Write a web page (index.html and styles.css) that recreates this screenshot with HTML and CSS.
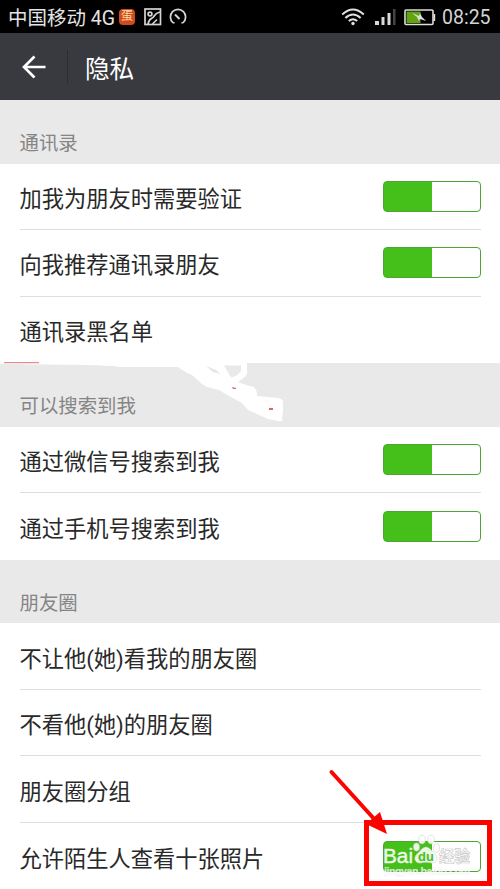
FILE: index.html
```
<!DOCTYPE html>
<html lang="zh-CN">
<head>
<meta charset="utf-8">
<title>隐私</title>
<link rel="stylesheet" href="styles.css">
</head>
<body>
<div class="screen">
  <div class="status">
    <span class="carrier">中国移动 4G</span>
    <span class="egg">蛋</span>
    <svg class="pic" width="18" height="18" viewBox="0 0 18 18" fill="none" stroke="#d4d4d4" stroke-width="1.7"><rect x="1" y="1" width="15.5" height="15.5"/><circle cx="6" cy="6" r="1.900"/><path d="M4 16C5 10 8 11 9.500 9S11 5 16 4M8.500 16l4.500-4.500"/></svg>
    <svg class="gauge" width="18" height="18" viewBox="0 0 18 18" fill="none" stroke="#d4d4d4" stroke-width="1.7"><path d="M5.500 14.800L3.800 14.500A7.600 7.600 0 1 1 14.200 14.500L12.500 14.800"/><path d="M6 6.500l4.500 4.500" stroke-width="2"/></svg>
    <span class="grow"></span>
    <svg class="wifi" width="24" height="18" viewBox="0 0 24 18" fill="none" stroke="#e0e0e0" stroke-width="2"><path d="M1.2 6.5Q12-3.5 22.8 6.5M4.4 9.9Q12 3 19.6 9.9M7.8 13.1Q12 9.3 16.2 13.1"/><circle cx="12" cy="15.5" r="1.7" fill="#e0e0e0" stroke="none"/></svg>
    <svg class="signal" width="21" height="18" viewBox="0 0 21 18" fill="#d8d8d8"><path d="M0 13h4v4H0zM6.500 9h3v8h-3zM12.500 5h3v12h-3z"/><path d="M18 1h2.500v16H18z" fill="#444"/></svg>
    <svg class="battery" width="32" height="17" viewBox="0 0 32 17"><rect x="1" y="1" width="28" height="14.500" rx="1" fill="#000" stroke="#ddd" stroke-width="1.600"/><path d="M29.500 5h1.700v7h-1.700z" fill="#ddd"/><path d="M2.500 2.500h14v11.500h-14z" fill="#62a312"/><path d="M8 4l7 3 1-3 2 4 4 4-6-2-1 2-2-4z" fill="#ddd"/></svg>
    <span class="clock">08:25</span>
  </div>
  <header class="bar">
    <svg class="back" width="24" height="24" viewBox="0 0 24 24" fill="none" stroke="#fff" stroke-width="2.700"><path d="M12.500 1.500L2 12l10.500 10.500M2 12h21.500"/></svg>
    <span class="split"></span>
    <h1>隐私</h1>
  </header>
  <h2>通讯录</h2>
  <ul>
    <li><span>加我为朋友时需要验证</span><i class="switch"></i></li>
    <li><span>向我推荐通讯录朋友</span><i class="switch"></i></li>
    <li><span>通讯录黑名单</span></li>
  </ul>
  <h2>可以搜索到我</h2>
  <ul>
    <li><span>通过微信号搜索到我</span><i class="switch"></i></li>
    <li><span>通过手机号搜索到我</span><i class="switch"></i></li>
  </ul>
  <h2>朋友圈</h2>
  <ul>
    <li><span>不让他(她)看我的朋友圈</span></li>
    <li><span>不看他(她)的朋友圈</span></li>
    <li><span>朋友圈分组</span></li>
    <li><span>允许陌生人查看十张照片</span><i class="switch"></i></li>
  </ul>

  <svg class="smear" width="300" height="70" viewBox="0 355 300 70">
    <path fill="#fff" d="M0 360H247V373Q246 377 242 379L238 382 246 385 254 387Q258 391 257 396L268 397 278 398Q284 399 283 404V412L282 418Q284 422 278 421L268 419 257 414 248 410 242 403 229 396 219 390 207 387 202 384 192 375 187 373 178 367H120L112 366 90 365 0 364z"/>
    <path fill="#e9e9e9" d="M224 365.500H241V371Q238 376 231 377.500z"/>
    <path fill="#dfe8e7" d="M206 366L216 370 220 374 213 372z"/>
    <path fill="#f0f0f0" d="M264 400l6 2h-3zM193 384l3 3zM204 378l6 4z"/>
    <path fill="#e58b8b" d="M4 362h35v1.200H4z"/>
    <path fill="#d66" d="M232 387l4 1v1h-3zM269 408h4v2h-4z"/>
  </svg>

  <div class="watermark">
    <svg class="logo" width="104" height="50" viewBox="380 832 104 50">
      <g fill="#fff" fill-opacity=".88" stroke="#d5d5d5" stroke-width=".7">
        <ellipse cx="416.500" cy="847" rx="3" ry="4"/><ellipse cx="422" cy="839.500" rx="3.300" ry="4.300"/><ellipse cx="431" cy="839.500" rx="3.300" ry="4.300"/><ellipse cx="436.500" cy="848" rx="3" ry="4.200"/>
        <path d="M426 847C421 848 420 852 417 854 413 858 415 863 420 863 425 862 427 862 432 863 438 863 438 857 435 854 432 852 431 848 426 847z"/>
      </g>
      <text class="bai" x="383" y="862.500" textLength="30" lengthAdjust="spacingAndGlyphs">Bai</text>
      <text class="du" x="418" y="860.500">du</text>
      <text class="exp" x="439" y="862">经验</text>
      <text class="url" x="384" y="874.500" textLength="86">jingyan.baidu.com</text>
    </svg>
  </div>
  <div class="frame"></div>
  <svg class="arrow" width="62" height="70" viewBox="328 767 62 70"><path d="M331.500 772L376 821" stroke="#fb0400" stroke-width="4" stroke-linecap="round"/><path d="M387 834L366 824 380 812z" fill="#fb0400"/></svg>
</div>
</body>
</html>
```

FILE: styles.css
```
* { box-sizing: border-box; }
body {
  margin: 0;
  background: #e9e9e9;
  font-family: Roboto, "Noto Sans CJK SC", sans-serif;
}
.screen {
  position: relative;
  width: 500px;
  height: 889px;
  overflow: hidden;
}
.status {
  display: flex;
  align-items: center;
  height: 33px;
  padding: 1px 9px 0 8px;
  background: #000;
  color: #e4e4e4;
  font-size: 19.5px;
  white-space: nowrap;
}
.carrier { width: 111px; margin-top: -2px; }
.egg {
  width: 16px;
  height: 16px;
  border-radius: 4px;
  background: #cf4a1c;
  color: #ffd9a0;
  font-size: 12px;
  line-height: 15px;
  text-align: center;
}
.pic { margin-left: 9px; }
.gauge { margin-left: 7px; }
.grow { flex: 1; }
.signal { margin-left: 10px; }
.battery { margin-left: 8px; }
.clock {
  width: 49px;
  margin-left: 6px;
  color: #d4d4d4;
}
.bar {
  display: flex;
  align-items: center;
  height: 67px;
  padding-left: 22px;
  background: #393a3f;
}
.split {
  width: 1px;
  height: 34px;
  margin: 0 17px 0 21px;
  background: #2c2d31;
}
h1 {
  margin: 0;
  color: #fff;
  font-size: 24.6px;
  font-weight: 400;
}
h2 {
  height: 63.6px;
  margin: 0;
  padding: 29px 0 0 19.5px;
  background: #e9e9e9;
  color: #858585;
  font-size: 19.4px;
  font-weight: 400;
  line-height: 30px;
}
ul {
  margin: 0;
  padding: 0 19.5px 0 19.5px;
  background: #fff;
  list-style: none;
}
li {
  display: flex;
  align-items: center;
  justify-content: space-between;
  height: 66.5px;
  border-bottom: 1px solid #dedede;
  color: #292929;
  font-size: 22.25px;
}
li:last-child { border-bottom: 0; }
li span { padding-top: 1px; white-space: nowrap; }
.switch {
  width: 97.5px;
  height: 31px;
  border: 1.5px solid #4fa436;
  border-radius: 4px;
  background: linear-gradient(90deg, #45c01a 48px, #fff 48px);
}
.smear {
  position: absolute;
  left: 0;
  top: 355px;
}
.watermark {
  position: absolute;
  left: 380px;
  top: 832px;
}
.logo { display: block; }
.logo text { font-family: "Liberation Sans", "Noto Sans CJK SC", sans-serif; }
.bai { fill: #fff; fill-opacity: .88; font-size: 20px; font-weight: 400; stroke: #fff; stroke-width: .5px; stroke-opacity: .8; }
.logo .du { fill: #45c01a; font-size: 13px; font-weight: 700; }
.exp { fill: #fff; stroke: #ccc; stroke-width: .7px; font-size: 15.5px; font-weight: 700; }
.url { fill: #fff; fill-opacity: .8; stroke: #ddd; stroke-width: .2px; font-size: 10.5px; font-weight: 700; }
.frame {
  position: absolute;
  left: 364px;
  top: 820px;
  width: 128px;
  height: 66px;
  border: 5px solid #fb0400;
}
.arrow {
  position: absolute;
  left: 328px;
  top: 767px;
}
```
